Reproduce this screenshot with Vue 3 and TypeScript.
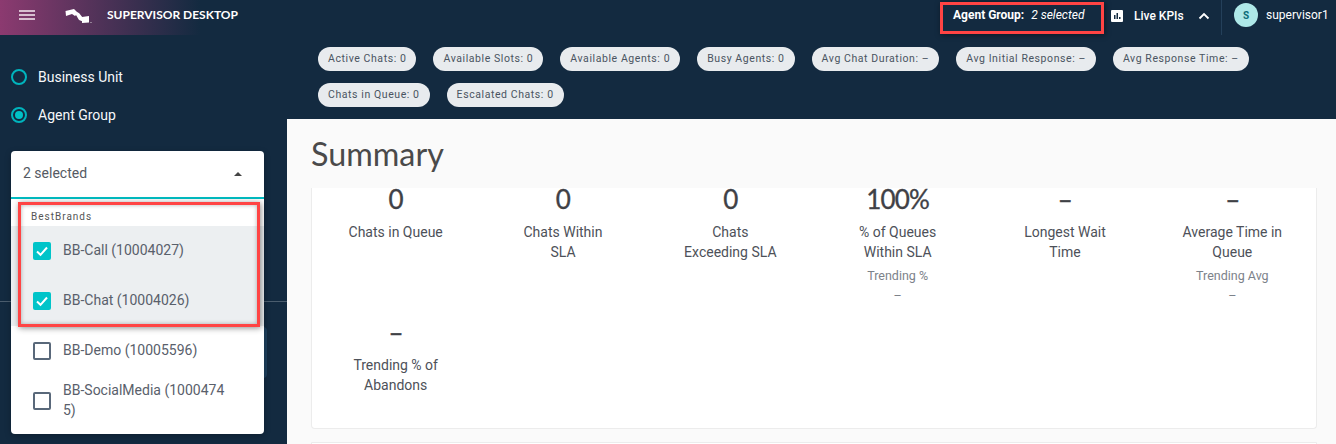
<script setup lang="ts">
const chips: string[] = [
  'Active Chats: 0', 'Available Slots: 0', 'Available Agents: 0', 'Busy Agents: 0',
  'Avg Chat Duration: –', 'Avg Initial Response: –', 'Avg Response Time: –',
  'Chats in Queue: 0', 'Escalated Chats: 0',
]
interface Metric { value: string; label: string; sub?: string; subValue?: string }
const metrics: Metric[] = [
  { value: '0', label: 'Chats in Queue' },
  { value: '0', label: 'Chats Within SLA' },
  { value: '0', label: 'Chats Exceeding SLA' },
  { value: '100%', label: '% of Queues Within SLA', sub: 'Trending %', subValue: '–' },
  { value: '–', label: 'Longest Wait Time' },
  { value: '–', label: 'Average Time in Queue', sub: 'Trending Avg', subValue: '–' },
  { value: '–', label: 'Trending % of Abandons' },
]
const options = [
  { label: 'BB-Call (10004027)', on: true },
  { label: 'BB-Chat (10004026)', on: true },
  { label: 'BB-Demo (10005596)', on: false },
  { label: 'BB-SocialMedia (10004745)', on: false },
]
</script>

<template>
  <div class="app">
    <header class="top">
      <div class="brand">
        <svg class="burger" width="16" height="10" viewBox="0 0 16 10"><path d="M0 1h16M0 5h16M0 9h16" stroke="#f6ecf2" stroke-width="1.7" /></svg>
        <svg class="logo" width="28" height="15" viewBox="0 0 28 15">
          <path d="M0.500 2L9 0l4 4-3 3-3-2-6 2z" fill="#fff" />
          <path d="M9 2l5 2 4 5 3 1-2 3-5-2-3-5z" fill="#fff" />
          <path d="M17 8l7-1v6.500L17 14z" fill="#fff" />
          <circle cx="26" cy="13.500" r="0.600" fill="#ddd" />
        </svg>
        <span class="title">SUPERVISOR DESKTOP</span>
      </div>
      <div class="top-right">
        <div class="ag"><b>Agent Group:</b><i>2 selected</i></div>
        <div class="kpi">
          <svg width="12" height="12" viewBox="0 0 12 12"><rect width="12" height="12" rx="1" fill="#fff" /><path d="M3 5h1.500v4H3zM5.500 3H7v6H5.500zM8 7h1.500v2H8z" fill="#132a40" /></svg>
          <span>Live KPIs</span>
          <svg class="chev" width="12" height="8" viewBox="0 0 12 8"><path d="M1.500 6.500L6 2l4.500 4.500" fill="none" stroke="#fff" stroke-width="1.800" /></svg>
        </div>
        <div class="user"><span class="avatar">S</span><span>supervisor1</span></div>
      </div>
    </header>

    <div class="body">
      <aside class="side">
        <label class="radio"><span class="dot"></span>Business Unit</label>
        <label class="radio"><span class="dot on"></span>Agent Group</label>
        <div class="rule"></div>
        <div class="behind"></div>

        <div class="dd">
          <div class="dd-head"><span>2 selected</span><span class="caret"></span></div>
          <div class="dd-group">BestBrands</div>
          <div v-for="o in options" :key="o.label" class="opt" :class="{ sel: o.on }">
            <span class="cb" :class="{ on: o.on }">
              <svg v-if="o.on" width="18" height="18" viewBox="0 0 18 18"><path d="M4 9.500l3.500 3.300L14 5.500" fill="none" stroke="#fff" stroke-width="2" /></svg>
            </span>
            <span class="opt-label">{{ o.label }}</span>
          </div>
          <div class="mark"></div>
        </div>
      </aside>

      <main class="main">
        <div class="chips">
          <span v-for="c in chips" :key="c" class="chip">{{ c }}</span>
        </div>
        <section class="content">
          <h1>Summary</h1>
          <div class="scroller">
            <div class="card">
              <div class="grid">
                <div v-for="m in metrics" :key="m.label" class="metric">
                  <div class="val">{{ m.value }}</div>
                  <div class="lab">{{ m.label }}</div>
                  <template v-if="m.sub">
                    <div class="sub first">{{ m.sub }}</div>
                    <div class="sub">{{ m.subValue }}</div>
                  </template>
                </div>
              </div>
            </div>
            <div class="card next"></div>
          </div>
        </section>
      </main>
    </div>
    <div class="mark-top"></div>
  </div>
</template>

<style>
html, body { margin: 0; overflow: hidden; }
</style>

<style scoped>
.app {
  position: relative; width: 1336px; height: 444px; overflow: hidden;
  background: #132a40; font-family: Roboto, sans-serif; color: #fff;
}
.top {
  height: 35px; display: flex; justify-content: space-between; align-items: center;
  background: linear-gradient(90deg, #8c3a70 0, #132a40 200px);
}
.brand { display: flex; align-items: center; height: 100%; }
.burger { margin-left: 19px; margin-top: -5px; }
.logo { margin-left: 30px; margin-top: -3px; }
.title { margin-left: 14px; margin-top: -6px; font: 700 12px Lato, sans-serif; }
.top-right { display: flex; align-items: center; height: 100%; }
.ag { width: 159px; display: flex; gap: 7px; font-size: 12px; margin-top: -5px; padding-left: 1px; box-sizing: border-box; white-space: nowrap; }
.ag b { font-weight: 700; }
.kpi { display: flex; align-items: center; width: 111px; box-sizing: border-box; padding-bottom: 4px; font-size: 12px; font-weight: 500; height: 100%; border-right: 1px solid #24405a; }
.kpi span { margin-left: 11px; }
.chev { margin-left: 14px; }
.user { display: flex; align-items: center; gap: 8px; font-size: 12px; padding-left: 12px; width: 114px; box-sizing: border-box; margin-top: -5px; }
.avatar {
  width: 24px; height: 24px; border-radius: 50%; background: #aee8e8; color: #0c6b78;
  display: flex; align-items: center; justify-content: center; font-size: 10px; font-weight: 700;
}
.body { display: flex; height: 409px; }
.side { position: relative; width: 287px; flex: none; padding-top: 23px; box-sizing: border-box; }
.radio { display: flex; align-items: center; height: 38px; padding-left: 11px; font-size: 14px; font-weight: 400; color: #f6f8fa; }
.dot {
  width: 16px; height: 16px; box-sizing: border-box; border: 2px solid #00b4bd; border-radius: 50%;
  margin-right: 11px; display: flex; align-items: center; justify-content: center;
}
.dot.on::after { content: ''; width: 8px; height: 8px; border-radius: 50%; background: #00c2c7; }
.rule { position: absolute; left: 0; right: 0; top: 266px; height: 1px; background: #4b5d6e; }
.behind { position: absolute; left: 11px; width: 256px; top: 292px; height: 51px; border-radius: 4px; background: #1d3f5c; }
.dd {
  position: absolute; left: 11px; top: 116px; width: 253px; height: 283px; background: #fff;
  border-radius: 4px; color: #4f5560; box-shadow: 0 2px 6px rgba(0,0,0,.25);
}
.dd-head {
  height: 48px; box-sizing: border-box; border-bottom: 2px solid #00bcc2; display: flex; align-items: center; justify-content: space-between;
  padding: 0 22px 2px 12px; font-size: 14px; color: #555a63;
}
.caret { width: 0; height: 0; border: 4px solid transparent; border-bottom: 4px solid #444; border-top: 0; margin-top: 2px; }
.dd-group { height: 27px; line-height: 36px; padding-left: 20px; font-size: 10px; letter-spacing: 1px; color: #555; }
.opt { height: 50px; display: flex; align-items: center; padding-left: 22px; font-size: 14px; color: #59606b; }
.opt.sel { background: #eceff1; }
.cb { width: 18px; height: 18px; border: 2px solid #59687a; border-radius: 2px; box-sizing: border-box; flex: none; margin-right: 12px; display: flex; }
.cb.on { background: #00c4c9; border: 0; }
.opt-label { width: 164px; line-height: 20px; word-break: break-all; margin-top: -2px; }
.mark {
  position: absolute; left: 7px; top: 51px; width: 242px; height: 125px; box-sizing: border-box;
  border: 3px solid #f44; box-shadow: 1px 1px 6px rgba(0,0,0,.45), inset 0 0 4px rgba(0,0,0,.3); pointer-events: none;
}
.mark-top {
  position: absolute; left: 940px; top: 2px; width: 164px; height: 32px; box-sizing: border-box;
  border: 3px solid #f44; box-shadow: 1px 1px 6px rgba(0,0,0,.45);
}
.main { flex: 1; min-width: 0; display: flex; flex-direction: column; }
.chips { height: 84px; box-sizing: border-box; padding: 12px 0 0 31px; display: flex; flex-wrap: wrap; align-content: flex-start; gap: 12px 17px; }
.chip {
  height: 24px; line-height: 24px; padding: 0 10px; border-radius: 12px; background: #e8ebee;
  color: #4a5461; font-size: 10.500px; letter-spacing: 0.58px; white-space: nowrap;
}
.content { flex: 1; min-height: 0; background: #fafafa; padding: 0 19px 0 24px; color: #444; }
h1 { margin: 0; height: 69px; font: 400 32.300px/69px Lato, sans-serif; color: #4a4a4a; }
.scroller { height: 256px; overflow: hidden; }
.card { background: #fff; height: 241px; border: 1px solid #ececec; border-top: 0; border-radius: 0 0 4px 4px; box-sizing: border-box; overflow: hidden; }
.card.next { margin-top: 13px; border-top: 1px solid #ececec; }
.grid { display: grid; grid-template-columns: repeat(6, 1fr); grid-auto-rows: 133px; margin-top: -7px; }
.metric { text-align: center; padding: 0 33px; font-size: 14px; line-height: 20px; color: #4d5159; }
.val { margin: 0 -20px 5px; font: 400 26px/36px Lato, sans-serif; letter-spacing: -0.8px; -webkit-text-stroke: 0.35px #3f4146; color: #3f4146; }
.sub { font-size: 12.500px; line-height: 19.500px; color: #7c828a; }
.sub.first { margin-top: 4px; }
</style>
